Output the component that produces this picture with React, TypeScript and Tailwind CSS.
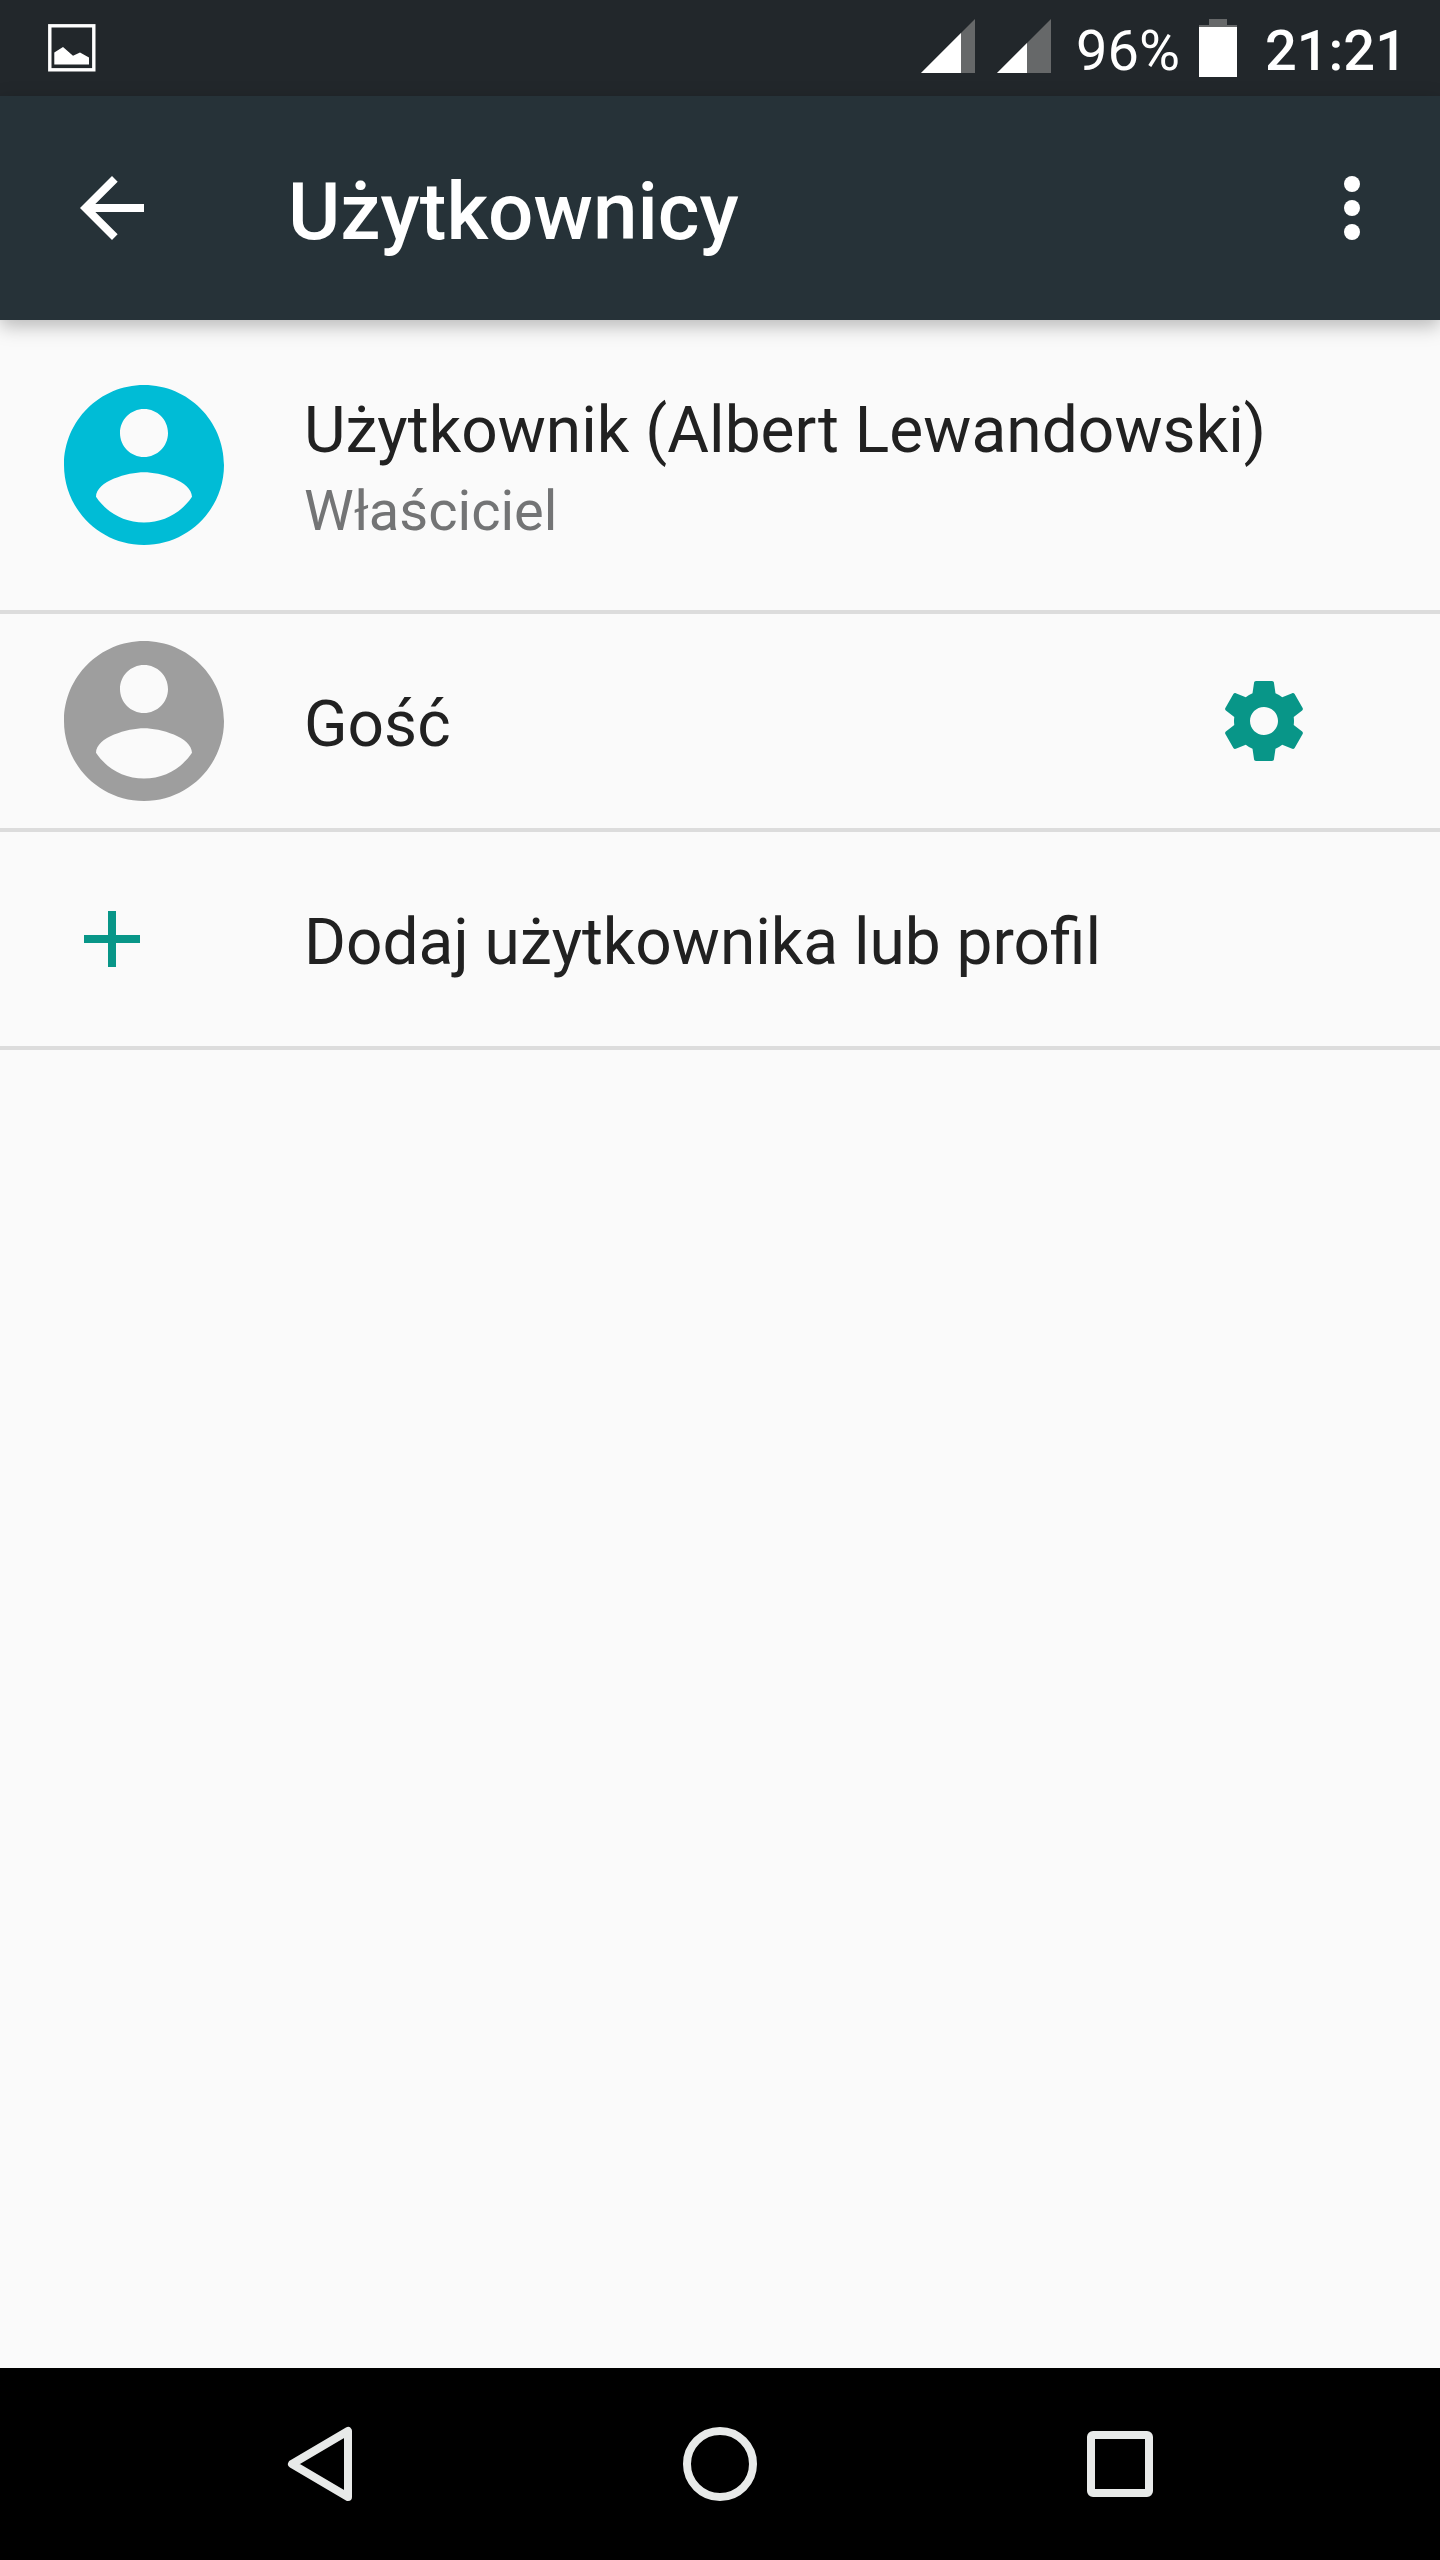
import { ReactNode } from 'react'

function ImageIcon() {
  return (
    <svg width="48" height="48" viewBox="0 0 48 48" fill="none">
      <rect x="1.8" y="1.8" width="44" height="44" stroke="white" strokeWidth="3.4" />
      <path d="M6.300 28.500L15 23L25 31.800L32 28.500L41 33.500V40.500H6.300Z" fill="white" />
    </svg>
  )
}

function SignalIcon({ level }: { level: number }) {
  return (
    <svg width="54" height="54" viewBox="0 0 54 54">
      <path d="M0 54L54 0V54Z" fill="#666869" />
      <path d={`M0 54L${level} ${54 - level}V54Z`} fill="white" />
    </svg>
  )
}

function BatteryIcon() {
  return (
    <svg width="38" height="58" viewBox="0 0 38 58">
      <path d="M10 0H28V6H38V10H0V6H10Z" fill="#666869" />
      <path d="M0 8H38V58H0Z" fill="white" />
    </svg>
  )
}

function Avatar({ className }: { className: string }) {
  return (
    <svg width="160" height="160" viewBox="2 2 20 20" fill="currentColor" className={className}>
      <path d="M12 2C6.48 2 2 6.48 2 12s4.48 10 10 10 10-4.480 10-10S17.520 2 12 2zm0 3c1.660 0 3 1.340 3 3s-1.340 3-3 3-3-1.340-3-3 1.340-3 3-3zm0 14.200c-2.500 0-4.710-1.280-6-3.220.03-1.990 4-3.080 6-3.080 1.990 0 5.970 1.090 6 3.080-1.290 1.940-3.500 3.220-6 3.220z" />
    </svg>
  )
}

function Row({ icon, children }: { icon: ReactNode; children: ReactNode }) {
  return (
    <div className="flex h-[218px] items-center border-b-4 border-[#dcdcdc] pl-16">
      <div className="flex w-60 shrink-0">{icon}</div>
      {children}
    </div>
  )
}

export default function App() {
  return (
    <div className="flex h-[2560px] w-[1440px] flex-col bg-[#fafafa] font-['Roboto',sans-serif] text-[#212121]">
      {/* Status bar */}
      <div className="flex h-24 shrink-0 items-center bg-[#22272b] pl-12 text-white">
        <ImageIcon />
        <div className="ml-auto mr-[33px] flex items-center">
          <div className="flex gap-[22px] pb-1">
            <SignalIcon level={40} />
            <SignalIcon level={30} />
          </div>
          <span className="ml-[25px] pt-1.5 text-[56px] leading-none">96%</span>
          <div className="ml-[19px]">
            <BatteryIcon />
          </div>
          <span className="ml-7 pt-1.5 text-[56px] font-medium leading-none">21:21</span>
        </div>
      </div>

      {/* App bar */}
      <header className="z-10 flex h-56 shrink-0 items-center bg-[#263238] px-20 text-white shadow-[0_6px_18px_rgba(0,0,0,0.27)]">
        <svg width="64" height="64" viewBox="4 4 16 16" fill="currentColor">
          <path d="M20 11H7.830l5.590-5.590L12 4l-8 8 8 8 1.410-1.410L7.830 13H20v-2z" />
        </svg>
        <h1 className="ml-36 pt-[7px] text-[80px] font-medium leading-none">Użytkownicy</h1>
        <div className="ml-auto flex flex-col gap-2">
          <span className="size-4 rounded-full bg-white" />
          <span className="size-4 rounded-full bg-white" />
          <span className="size-4 rounded-full bg-white" />
        </div>
      </header>

      {/* User list */}
      <main className="flex-1">
        <div className="flex h-[294px] items-center border-b-4 border-[#dcdcdc] pl-16">
          <div className="w-60 shrink-0">
            <Avatar className="text-[#00bcd6]" />
          </div>
          <div className="pt-3">
            <div className="text-[64px] leading-[76px] tracking-[0.05px]">Użytkownik (Albert Lewandowski)</div>
            <div className="mt-1 text-[56px] leading-[76px] text-[#737475]">Właściciel</div>
          </div>
        </div>
        <Row icon={<Avatar className="text-[#9e9e9e]" />}>
          <span className="pt-2 text-[64px] leading-[76px]">Gość</span>
          <svg width="80" height="80" viewBox="2 2 20 20" fill="#089688" className="ml-auto mr-[136px]">
            <path d="M19.430 12.980c.04-.32.07-.64.07-.98s-.03-.66-.07-.98l2.110-1.650c.19-.15.24-.42.12-.64l-2-3.460c-.12-.22-.39-.3-.61-.22l-2.490 1c-.52-.4-1.080-.73-1.690-.98l-.38-2.650C14.460 2.180 14.250 2 14 2h-4c-.25 0-.46.18-.49.42l-.38 2.650c-.61.25-1.170.59-1.690.98l-2.490-1c-.23-.09-.49 0-.61.22l-2 3.460c-.13.22-.07.49.12.64l2.110 1.650c-.04.32-.07.65-.07.98s.03.66.07.98l-2.110 1.650c-.19.15-.24.42-.12.64l2 3.460c.12.22.39.3.61.22l2.490-1c.52.4 1.080.73 1.690.98l.38 2.650c.03.24.24.42.49.42h4c.25 0 .46-.18.49-.42l.38-2.650c.61-.25 1.170-.59 1.690-.98l2.490 1c.23.09.49 0 .61-.22l2-3.460c.12-.22.07-.49-.12-.64l-2.110-1.650zM12 15.500c-1.930 0-3.500-1.570-3.500-3.500s1.570-3.500 3.500-3.500 3.500 1.570 3.500 3.500-1.570 3.500-3.500 3.500z" />
          </svg>
        </Row>
        <Row
          icon={
            <svg width="56" height="56" viewBox="0 0 56 56" fill="#089688" className="ml-5">
              <path d="M24 0H32V24H56V32H32V56H24V32H0V24H24Z" />
            </svg>
          }
        >
          <span className="pt-2 text-[64px] leading-[76px]">Dodaj użytkownika lub profil</span>
        </Row>
      </main>

      {/* Navigation bar */}
      <nav className="flex h-48 shrink-0 items-center justify-center gap-80 bg-black">
        <svg width="80" height="80" viewBox="0 0 80 80" fill="none" stroke="#e8eae9" strokeWidth="8" strokeLinejoin="round">
          <path d="M68 7V73L12 40Z" />
        </svg>
        <svg width="80" height="80" viewBox="0 0 80 80" fill="none" stroke="#e8eae9" strokeWidth="8">
          <circle cx="40" cy="40" r="33" />
        </svg>
        <svg width="80" height="80" viewBox="0 0 80 80" fill="none" stroke="#e8eae9" strokeWidth="8">
          <rect x="11" y="11" width="58" height="58" rx="2" />
        </svg>
      </nav>
    </div>
  )
}
